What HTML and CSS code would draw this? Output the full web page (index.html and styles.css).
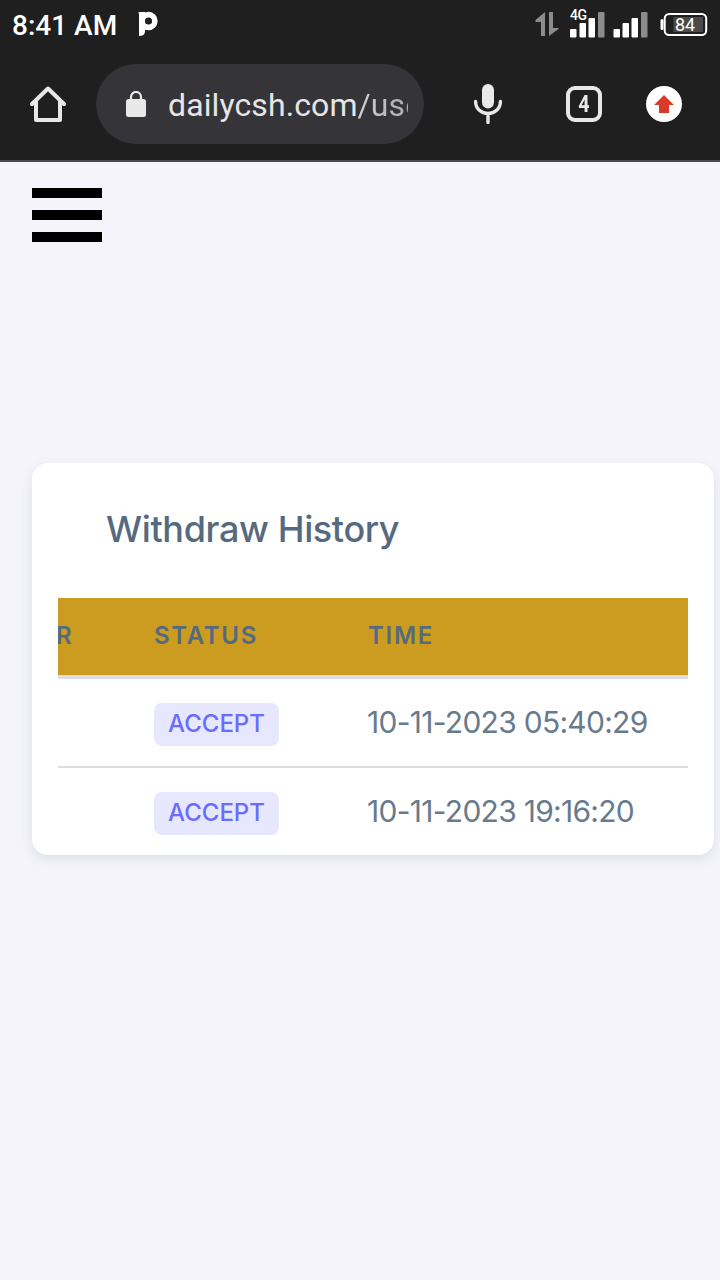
FILE: index.html
```html
<!DOCTYPE html>
<html lang="en">
<head>
    <meta charset="UTF-8">
    <meta name="viewport" content="width=device-width, initial-scale=1.0">
    <title>Withdraw History</title>
    <link rel="stylesheet" href="styles.css">
</head>

<body>
    <!-- Status bar -->
    <div class="statusbar">
        <span class="clock">8:41 AM</span>
        <svg class="app-icon" width="22" height="26" viewBox="0 0 22 26">
            <path d="M0.500 1H7V21Q6.500 25 1 25V3.500Z" fill="#fff"/>
            <circle cx="10.500" cy="10" r="6.400" fill="none" stroke="#fff" stroke-width="5.600"/>
        </svg>
        <svg class="signals" width="186" height="40" viewBox="0 0 186 40">
            <path d="M9 12V36H5V22H-0.500V20Z M13 12H17V28H22.500V29L13 36Z" fill="#8c8c8c"/>
            <text class="net" x="34" y="20">4G</text>
            <g fill="#fff">
                <rect x="34" y="29" width="6.500" height="8.500" rx="1"/>
                <rect x="43.500" y="23" width="6.500" height="14.500" rx="1"/>
                <rect x="52.500" y="18" width="6.500" height="19.500" rx="1"/>
                <rect x="77.500" y="29" width="6.500" height="8.500" rx="1"/>
                <rect x="86.500" y="23" width="6.500" height="14.500" rx="1"/>
                <rect x="95.500" y="18" width="6.500" height="19.500" rx="1"/>
                <rect x="124.500" y="19" width="3" height="11" rx="1.500"/>
            </g>
            <rect x="62" y="12" width="6.500" height="25.500" rx="1" fill="#8c8c8c"/>
            <rect x="105" y="12" width="6.500" height="25.500" rx="1" fill="#8c8c8c"/>
            <rect x="128.700" y="14" width="41.500" height="21" rx="4.500" fill="none" stroke="#fff" stroke-width="2"/>
            <rect x="137.500" y="17" width="29.500" height="15" fill="#4a4a4a"/>
            <text class="battery" x="149" y="31">84</text>
        </svg>
    </div>

    <!-- Browser toolbar -->
    <div class="toolbar">
        <svg class="home" width="36" height="36" viewBox="0 0 36 36" fill="none" stroke="#e8e8e8" stroke-width="4" stroke-linecap="round" stroke-linejoin="round">
            <path d="M2 18L18 2.500L34 18"/>
            <path d="M6 15V34H30V15"/>
        </svg>
        <div class="address">
            <svg class="lock" width="20" height="26" viewBox="0 0 20 26">
                <path d="M5 10V6A5 5 0 0 1 15 6V10" fill="none" stroke="#e8e8e8" stroke-width="2.200"/>
                <rect y="8" width="20" height="18" rx="2.500" fill="#e8e8e8"/>
            </svg>
            <div class="url">dailycsh.com<span class="path">/use</span></div>
        </div>
        <svg class="mic" width="28" height="40" viewBox="0 0 28 40">
            <rect x="8" y="0" width="12" height="24.500" rx="6" fill="#e8e8e8"/>
            <path d="M1.600 17.500C1.600 25 7.500 29.500 14 29.500S26.400 25 26.400 17.500M14 30V38.500" fill="none" stroke="#e8e8e8" stroke-width="3.400" stroke-linecap="round"/>
        </svg>
        <div class="tabs"><span class="tab-count">4</span></div>
        <div class="update">
            <svg width="20" height="18" viewBox="0 0 20 18">
                <path d="M10 0L20 10H15V18H5V10H0Z" fill="#d93a2b"/>
            </svg>
        </div>
    </div>

    <div class="page">
        <div class="menu-btn">
            <div class="bar"></div>
            <div class="bar"></div>
            <div class="bar"></div>
        </div>

        <div class="card">
            <h5 class="card-title">Withdraw History</h5>
            <div class="table-responsive">
                <table class="table">
                    <thead>
                        <tr>
                            <th class="col-number">R</th>
                            <th class="col-status">Status</th>
                            <th>Time</th>
                        </tr>
                    </thead>
                    <tbody>
                        <tr>
                            <td></td>
                            <td><span class="badge">ACCEPT</span></td>
                            <td class="time">10-11-2023 05:40:29</td>
                        </tr>
                        <tr>
                            <td></td>
                            <td><span class="badge">ACCEPT</span></td>
                            <td class="time">10-11-2023 19:16:20</td>
                        </tr>
                    </tbody>
                </table>
            </div>
        </div>
    </div>
</body>
</html>
```
FILE: styles.css
```css
* {
    box-sizing: border-box;
}
body {
    margin: 0;
    min-height: 1280px;
    background-color: #f4f4fa;
    color: #697a8d;
    font-family: Inter, "Liberation Sans", sans-serif;
}

/* Status bar */
.statusbar {
    display: flex;
    height: 48px;
    padding-left: 12px;
    background-color: #1f1f1f;
    color: #fff;
    font-family: Roboto, sans-serif;
}
.clock {
    width: 126px;
    font-size: 28px;
    font-weight: 500;
    line-height: 51px;
    white-space: nowrap;
}
.app-icon {
    margin-top: 11px;
}
.signals {
    margin-left: auto;
    margin-right: -2px;
    overflow: visible;
}
.net {
    fill: #fff;
    font-size: 14px;
    font-weight: 500;
    letter-spacing: -0.5px;
}
.battery {
    fill: #fff;
    font-size: 18px;
    text-anchor: middle;
}

/* Browser toolbar */
.toolbar {
    display: flex;
    align-items: center;
    height: 114px;
    padding: 0 38px 0 30px;
    border-bottom: 2px solid #4b4b4e;
    background-color: #1f1f1f;
    font-family: Roboto, sans-serif;
}
.address {
    display: flex;
    align-items: center;
    width: 328px;
    height: 80px;
    margin-left: 30px;
    padding: 0 16px 0 30px;
    border-radius: 40px;
    background-color: #353438;
}
.url {
    flex: 1;
    margin-left: 22px;
    padding-top: 2px;
    overflow: hidden;
    color: #e6e6e8;
    font-size: 32px;
    letter-spacing: 0.1px;
    line-height: 44px;
    white-space: nowrap;
}
.path {
    background: linear-gradient(to right, #d2d2d4, #a0a0a3);
    -webkit-background-clip: text;
    background-clip: text;
    color: transparent;
}
.mic {
    margin-left: 50px;
}
.tabs {
    display: flex;
    align-items: center;
    justify-content: center;
    width: 36px;
    height: 36px;
    margin-left: 64px;
    border: 4px solid #e8e8e8;
    border-radius: 9px;
    color: #e8e8e8;
}
.tab-count {
    font-size: 24px;
    font-weight: 700;
    line-height: 28px;
    transform: scaleX(0.82);
}
.update {
    display: flex;
    align-items: center;
    justify-content: center;
    width: 36px;
    height: 36px;
    margin-left: 44px;
    border-radius: 50%;
    background-color: #fff;
}

/* Page */
.page {
    padding: 26px 6px 0 32px;
}
.menu-btn {
    display: flex;
    flex-direction: column;
    gap: 12px;
    width: 70px;
}
.bar {
    height: 10px;
    background-color: #000;
}
.card {
    height: 392px;
    margin-top: 221px;
    padding: 0 26px;
    border-radius: 16px;
    background-color: #fff;
    box-shadow: 0 4px 12px rgba(67, 89, 113, 0.12);
}
.card-title {
    height: 135px;
    margin: 0;
    padding-left: 48px;
    color: #566a7f;
    font-size: 36px;
    font-weight: 500;
    letter-spacing: -0.37px;
    line-height: 133px;
    white-space: nowrap;
}
.table-responsive {
    overflow: hidden;
}
.table {
    width: 630px;
    border-collapse: separate;
    border-spacing: 0;
    table-layout: fixed;
}
.table th {
    height: 81px;
    padding: 0 0 3px 24px;
    border-bottom: 4px solid #dcdce4;
    background-color: #cc9c20;
    background-clip: padding-box;
    color: #566a7f;
    font-size: 24px;
    font-weight: 600;
    letter-spacing: 1.7px;
    text-align: left;
    text-transform: uppercase;
}
.table .col-number {
    width: 72px;
    padding-left: 0;
    text-indent: -2px;
}
.table .col-status {
    width: 214px;
}
.table td {
    height: 89px;
    padding: 0 0 0 24px;
    border-bottom: 2px solid #d9dee3;
    font-size: 30px;
    white-space: nowrap;
}
.table tr:last-child td {
    height: 87px;
    border-bottom: none;
}
.table .time {
    padding: 0 0 2px 23px;
    letter-spacing: -0.72px;
}
.badge {
    display: block;
    width: 125px;
    height: 43px;
    margin-top: 3px;
    border-radius: 8px;
    background-color: #e7e7ff;
    color: #696cff;
    font-size: 24px;
    font-weight: 450;
    line-height: 42px;
    text-align: center;
}
```
